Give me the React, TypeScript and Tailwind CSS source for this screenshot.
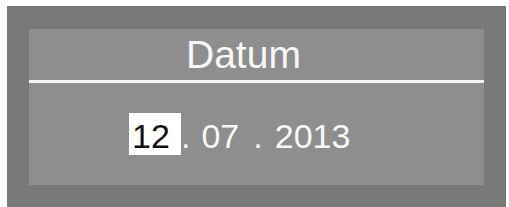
export default function App() {
  return (
    <div className="w-[509px] h-[207px] bg-white pt-[6px] pl-[7px] overflow-hidden" style={{ fontFamily: '"Liberation Sans", Arial, sans-serif' }}>
      <div className="w-[499px] h-[201px] bg-[#7a7979] pt-[23px] pl-[22px]">
        <div className="w-[455px] h-[156px] bg-[#8f8e8e] flex flex-col">
          <div className="h-[51px] pl-[157px] text-[39px] leading-[51px] text-[#f7f7f7]">Datum</div>
          <div className="h-[3px] bg-[#f4f4f4]" />
          <div className="flex items-start pl-[100px] pt-[30px] text-[34px] leading-[38px] text-[#f7f7f7]">
            <div className="w-[52px] h-[42px] bg-white text-[#111] pl-[3px] pt-[4px]">12</div>
            <span className="pt-[4px]">.</span>
            <span className="pt-[4px] ml-[11px]">07</span>
            <span className="pt-[4px] ml-[14px]">.</span>
            <span className="pt-[4px] ml-[12px]">2013</span>
          </div>
        </div>
      </div>
    </div>
  );
}
